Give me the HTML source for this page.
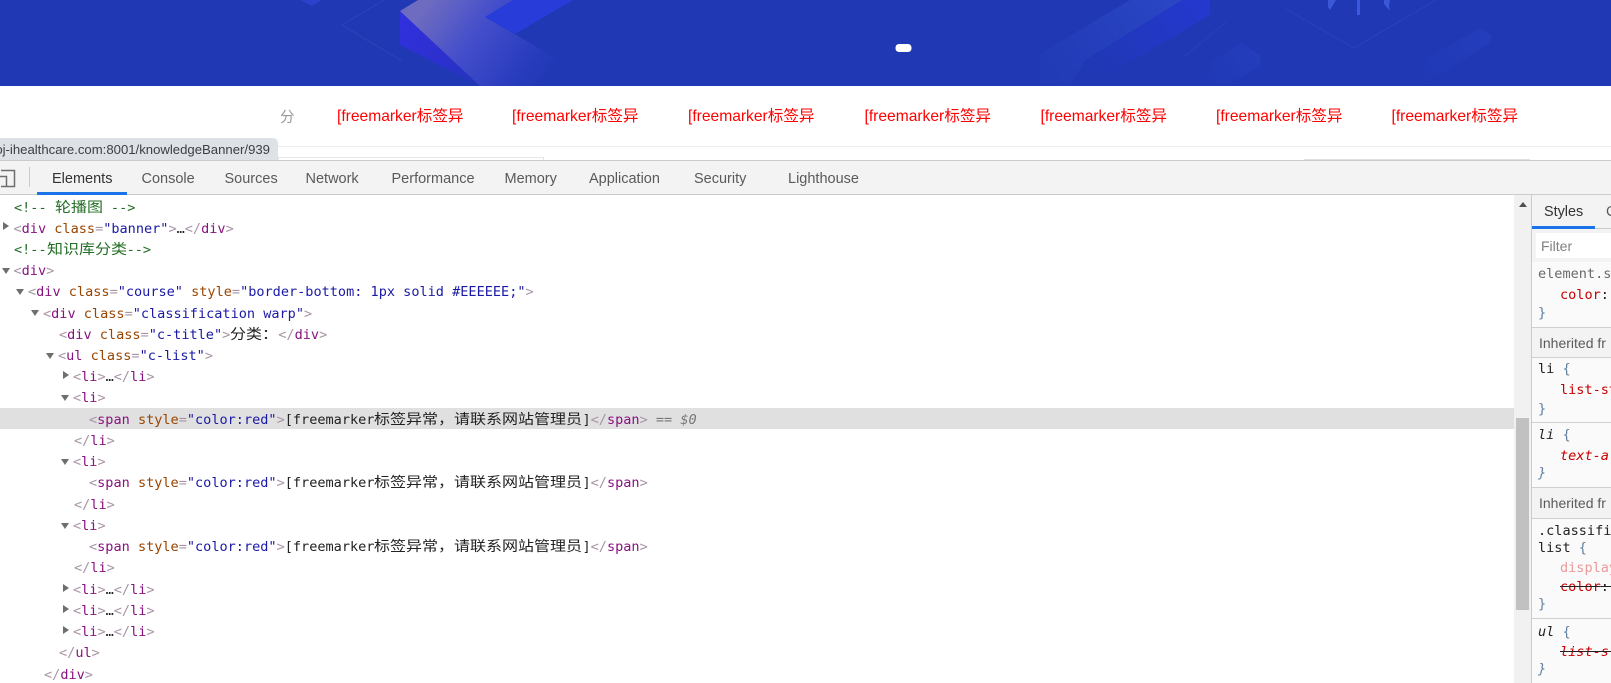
<!DOCTYPE html>
<html><head><meta charset="utf-8"><style>
*{box-sizing:border-box}
html,body{margin:0;padding:0;width:1611px;height:683px;overflow:hidden;background:#fff}
body{position:relative;font-family:"Liberation Sans","Noto Sans CJK SC",sans-serif}
.abs{position:absolute}
.r{position:absolute;top:116.5px;transform:translateY(-50%);color:#f00;font-size:15.6px;white-space:nowrap;line-height:20px}
.tab{position:absolute;top:178.5px;transform:translateY(-50%);font-size:14.5px;color:#5a5a5a;line-height:20px;white-space:nowrap}
.m{position:absolute;left:0;margin-top:0;white-space:nowrap;font-family:"DejaVu Sans Mono","Noto Sans CJK SC",monospace;font-size:13.55px;line-height:20px;height:20px;color:#222}
.k{color:#881280}.b{color:#a894a6}.a{color:#994500}.v{color:#1a1aa6}.c{color:#236e25}
.z{display:inline-block;overflow:visible;font-family:"Noto Sans CJK SC",sans-serif;font-size:14px;transform:scaleX(1.143);transform-origin:left center;vertical-align:top;line-height:19px;white-space:nowrap}
.tri{position:absolute;width:0;height:0}
.tr{border-left:6px solid #6e6e6e;border-top:4.5px solid transparent;border-bottom:4.5px solid transparent}
.td{border-top:6px solid #6e6e6e;border-left:4.5px solid transparent;border-right:4.5px solid transparent}
.s{position:absolute;left:1538px;margin-top:0;white-space:nowrap;font-family:"DejaVu Sans Mono",monospace;font-size:13.55px;line-height:20px;color:#222}
.p{left:1560px;color:#c80000}
.br{color:#5f7ea0}
.d{position:absolute;left:1532px;width:79px;height:1px;background:#d0d0d0}
.inh{position:absolute;left:1532px;width:79px;background:#f3f3f3;height:30px}
.inh span{position:absolute;left:7px;top:5px;font-size:14px;line-height:20px;color:#5a5a5a;white-space:nowrap}
.st{text-decoration:line-through;text-decoration-color:#222}
</style></head><body>

<svg class="abs" style="left:0;top:0" width="1611" height="86" viewBox="0 0 1611 86">
<defs>
<linearGradient id="g1" gradientUnits="userSpaceOnUse" x1="430" y1="0" x2="545" y2="85"><stop offset="0" stop-color="#6e6cc0"/><stop offset=".4" stop-color="#444ecb"/><stop offset=".8" stop-color="#283cbe"/><stop offset="1" stop-color="#2038b4"/></linearGradient>
<linearGradient id="g2" gradientUnits="userSpaceOnUse" x1="405" y1="20" x2="490" y2="85"><stop offset="0" stop-color="#3030dc"/><stop offset=".55" stop-color="#2c30cc"/><stop offset="1" stop-color="#2038b4"/></linearGradient>
<linearGradient id="g3" gradientUnits="userSpaceOnUse" x1="1210" y1="0" x2="1095" y2="80"><stop offset="0" stop-color="#2438d0"/><stop offset="1" stop-color="#2038b4"/></linearGradient>
<linearGradient id="g4" gradientUnits="userSpaceOnUse" x1="1170" y1="0" x2="1050" y2="75"><stop offset="0" stop-color="#2a46c4"/><stop offset="1" stop-color="#213ab6"/></linearGradient>
<linearGradient id="g5" gradientUnits="userSpaceOnUse" x1="1250" y1="45" x2="1200" y2="80"><stop offset="0" stop-color="#233dbc"/><stop offset="1" stop-color="#2038b4"/></linearGradient>
<linearGradient id="g6" gradientUnits="userSpaceOnUse" x1="1485" y1="30" x2="1410" y2="75"><stop offset="0" stop-color="#233dbc"/><stop offset="1" stop-color="#2038b4"/></linearGradient>
</defs>
<rect width="1611" height="86" fill="#2038b4"/>
<path d="M300 0h22l-10 6z" fill="#2a42cc"/>
<path d="M384 0 L342 25 L402 61" fill="none" stroke="#2f44b8" stroke-width="1"/>
<path d="M513 0 L485 17 L515 34 L573 0Z" fill="#273cd8"/>
<path d="M400 11 V45 L480 86 H540 Z" fill="url(#g2)"/>
<path d="M400 11 L418 0 H513 L485 17 L570 66 L535 86 H480Z" fill="url(#g1)"/>
<path d="M1182 0 H1210 V15 L1090 86 H1040 Z" fill="url(#g3)"/>
<path d="M1040 54 L1130 0 H1182 L1085 60 L1070 86 H1040Z" fill="url(#g4)"/>
<path d="M1185 56 L1226 22" stroke="#2640bc" stroke-width="1" fill="none"/>
<path d="M1190 76 L1241 43 L1260 55 V66 L1225 86 H1170Z" fill="url(#g5)"/>
<path d="M1286 9 L1354 48 L1436 0" fill="none" stroke="#2a42bc" stroke-width="1"/>
<path d="M1328 0 h8 l-6 10 -2 -3z M1384 0 h6 l-1 6 1 5 -6 -7z" fill="#3a58d8"/>
<rect x="1357" y="0" width="3" height="15" fill="#3a58e0"/>
<path d="M1400 74 L1480 28 L1491 35 V42 L1430 80 L1405 86 H1390Z" fill="url(#g6)"/>
<rect x="895.5" y="44" width="16" height="8" rx="3.5" fill="#fff"/>
</svg>

<div class="abs" style="left:280px;top:107px;font-size:14.5px;line-height:20px;color:#999;font-family:'Noto Sans CJK SC',sans-serif">分</div>
<div class="r" style="left:337px">[freemarker标签异</div>
<div class="r" style="left:512px">[freemarker标签异</div>
<div class="r" style="left:688px">[freemarker标签异</div>
<div class="r" style="left:864.5px">[freemarker标签异</div>
<div class="r" style="left:1040.5px">[freemarker标签异</div>
<div class="r" style="left:1216px">[freemarker标签异</div>
<div class="r" style="left:1391.5px">[freemarker标签异</div>

<div class="abs" style="left:0;top:146px;width:1611px;height:1px;background:#eee"></div>
<div class="abs" style="left:278px;top:157px;width:266px;height:4px;border:1px solid #e6e6e6"></div>
<div class="abs" style="left:1304px;top:159px;width:226px;height:2px;background:#e0e0e0"></div>

<div class="abs" style="left:0;top:138px;width:278px;height:23px;background:#dee1e6;border-top-right-radius:5px;overflow:hidden">
<div class="abs" style="right:8px;top:2px;font-size:13.15px;line-height:20px;color:#3c4043;white-space:nowrap">oj-ihealthcare.com:8001/knowledgeBanner/939</div></div>

<!-- devtools -->
<div class="abs" style="left:0;top:160px;width:1611px;height:35px;background:#f3f3f3;border-top:1px solid #cbcbcb;border-bottom:1px solid #cbcbcb"></div>
<svg class="abs" style="left:0;top:165px" width="32" height="24" viewBox="0 0 32 24"><path d="M1 5.5H14.5V21.5H1" fill="none" stroke="#6e6e6e" stroke-width="1.5"/><path d="M0 11.5H6.5V21" fill="none" stroke="#6e6e6e" stroke-width="1.5"/><rect x="29" y="2" width="1" height="20" fill="#ccc"/></svg>
<div class="tab" style="left:52px;color:#333">Elements</div>
<div class="tab" style="left:141.5px">Console</div>
<div class="tab" style="left:224.5px">Sources</div>
<div class="tab" style="left:305.5px">Network</div>
<div class="tab" style="left:391.5px">Performance</div>
<div class="tab" style="left:504.5px">Memory</div>
<div class="tab" style="left:589px">Application</div>
<div class="tab" style="left:694px">Security</div>
<div class="tab" style="left:788px">Lighthouse</div>
<div class="abs" style="left:37px;top:192px;width:90px;height:3px;background:#1a73e8"></div>

<!-- highlight -->
<div class="abs" style="left:0;top:408px;width:1514px;height:21px;background:#e0e0e0"></div>

<div class="m" style="top:198px;left:14px"><span class="c">&lt;!-- <span class="z" style="width:48px">轮播图</span> --&gt;</span></div>
<div class="tri tr" style="left:3px;top:222px"></div>
<div class="m" style="top:219px;left:13.5px"><span class="b">&lt;</span><span class="k">div</span> <span class="a">class</span><span class="b">=</span><span class="v">"banner"</span><span class="b">&gt;</span>…<span class="b">&lt;/</span><span class="k">div</span><span class="b">&gt;</span></div>
<div class="m" style="top:240px;left:14px"><span class="c">&lt;!--<span class="z" style="width:80px">知识库分类</span>--&gt;</span></div>
<div class="tri td" style="left:1.5px;top:268px"></div>
<div class="m" style="top:261px;left:13.5px"><span class="b">&lt;</span><span class="k">div</span><span class="b">&gt;</span></div>
<div class="tri td" style="left:16px;top:289px"></div>
<div class="m" style="top:282px;left:28px"><span class="b">&lt;</span><span class="k">div</span> <span class="a">class</span><span class="b">=</span><span class="v">"course"</span> <span class="a">style</span><span class="b">=</span><span class="v">"border-bottom: 1px solid #EEEEEE;"</span><span class="b">&gt;</span></div>
<div class="tri td" style="left:31px;top:310px"></div>
<div class="m" style="top:304px;left:43px"><span class="b">&lt;</span><span class="k">div</span> <span class="a">class</span><span class="b">=</span><span class="v">"classification warp"</span><span class="b">&gt;</span></div>
<div class="m" style="top:325px;left:59px"><span class="b">&lt;</span><span class="k">div</span> <span class="a">class</span><span class="b">=</span><span class="v">"c-title"</span><span class="b">&gt;</span><span class="z" style="width:48px">分类：</span><span class="b">&lt;/</span><span class="k">div</span><span class="b">&gt;</span></div>
<div class="tri td" style="left:46px;top:353px"></div>
<div class="m" style="top:346px;left:58px"><span class="b">&lt;</span><span class="k">ul</span> <span class="a">class</span><span class="b">=</span><span class="v">"c-list"</span><span class="b">&gt;</span></div>
<div class="tri tr" style="left:63px;top:371px"></div>
<div class="m" style="top:367px;left:73px"><span class="b">&lt;</span><span class="k">li</span><span class="b">&gt;</span>…<span class="b">&lt;/</span><span class="k">li</span><span class="b">&gt;</span></div>
<div class="tri td" style="left:61px;top:395px"></div>
<div class="m" style="top:388px;left:73px"><span class="b">&lt;</span><span class="k">li</span><span class="b">&gt;</span></div>
<div class="m" style="top:410px;left:89px"><span class="b">&lt;</span><span class="k">span</span> <span class="a">style</span><span class="b">=</span><span class="v">"color:red"</span><span class="b">&gt;</span>[freemarker<span class="z" style="width:208px">标签异常，请联系网站管理员</span>]<span class="b">&lt;/</span><span class="k">span</span><span class="b">&gt;</span> <span style="color:#777">==</span> <i style="color:#777">$0</i></div>
<div class="m" style="top:431px;left:74px"><span class="b">&lt;/</span><span class="k">li</span><span class="b">&gt;</span></div>
<div class="tri td" style="left:61px;top:459px"></div>
<div class="m" style="top:452px;left:73px"><span class="b">&lt;</span><span class="k">li</span><span class="b">&gt;</span></div>
<div class="m" style="top:473px;left:89px"><span class="b">&lt;</span><span class="k">span</span> <span class="a">style</span><span class="b">=</span><span class="v">"color:red"</span><span class="b">&gt;</span>[freemarker<span class="z" style="width:208px">标签异常，请联系网站管理员</span>]<span class="b">&lt;/</span><span class="k">span</span><span class="b">&gt;</span></div>
<div class="m" style="top:495px;left:74px"><span class="b">&lt;/</span><span class="k">li</span><span class="b">&gt;</span></div>
<div class="tri td" style="left:61px;top:523px"></div>
<div class="m" style="top:516px;left:73px"><span class="b">&lt;</span><span class="k">li</span><span class="b">&gt;</span></div>
<div class="m" style="top:537px;left:89px"><span class="b">&lt;</span><span class="k">span</span> <span class="a">style</span><span class="b">=</span><span class="v">"color:red"</span><span class="b">&gt;</span>[freemarker<span class="z" style="width:208px">标签异常，请联系网站管理员</span>]<span class="b">&lt;/</span><span class="k">span</span><span class="b">&gt;</span></div>
<div class="m" style="top:558px;left:74px"><span class="b">&lt;/</span><span class="k">li</span><span class="b">&gt;</span></div>
<div class="tri tr" style="left:63px;top:584px"></div>
<div class="m" style="top:580px;left:73px"><span class="b">&lt;</span><span class="k">li</span><span class="b">&gt;</span>…<span class="b">&lt;/</span><span class="k">li</span><span class="b">&gt;</span></div>
<div class="tri tr" style="left:63px;top:605px"></div>
<div class="m" style="top:601px;left:73px"><span class="b">&lt;</span><span class="k">li</span><span class="b">&gt;</span>…<span class="b">&lt;/</span><span class="k">li</span><span class="b">&gt;</span></div>
<div class="tri tr" style="left:63px;top:626px"></div>
<div class="m" style="top:622px;left:73px"><span class="b">&lt;</span><span class="k">li</span><span class="b">&gt;</span>…<span class="b">&lt;/</span><span class="k">li</span><span class="b">&gt;</span></div>
<div class="m" style="top:643px;left:59px"><span class="b">&lt;/</span><span class="k">ul</span><span class="b">&gt;</span></div>
<div class="m" style="top:665px;left:44px"><span class="b">&lt;/</span><span class="k">div</span><span class="b">&gt;</span></div>

<!-- scrollbar -->
<div class="abs" style="left:1514px;top:195px;width:17px;height:488px;background:#f1f1f1"></div>
<div class="abs" style="left:1516px;top:418px;width:13px;height:192px;background:#c1c1c1"></div>
<div class="tri" style="left:1518.5px;top:202px;border-bottom:5px solid #505050;border-left:4px solid transparent;border-right:4px solid transparent"></div>
<div class="abs" style="left:1531px;top:195px;width:1px;height:488px;background:#cbcbcb"></div>

<!-- styles panel -->
<div class="abs" style="left:1532px;top:195px;width:79px;height:488px;background:#fafafa"></div>
<div class="abs" style="left:1532px;top:195px;width:79px;height:34px;background:#f3f3f3;border-bottom:1px solid #cbcbcb"></div>
<div class="abs" style="left:1544px;top:202px;font-size:14.4px;line-height:20px;color:#333">Styles</div>
<div class="abs" style="left:1606px;top:202px;font-size:14.4px;line-height:20px;color:#5a5a5a">C</div>
<div class="abs" style="left:1532px;top:226px;width:63px;height:3px;background:#1a73e8"></div>
<div class="abs" style="left:1532px;top:229px;width:79px;height:33px;background:#f3f3f3"></div>
<div class="abs" style="left:1536px;top:233px;width:75px;height:25px;background:#fff"></div>
<div class="abs" style="left:1541px;top:236px;font-size:14px;line-height:20px;color:#808080">Filter</div>

<div class="s" style="top:264px;color:#6a6a6a">element.s</div>
<div class="s p" style="top:285px">color<span style="color:#222">:</span></div>
<div class="s br" style="top:303px">}</div>
<div class="d" style="top:327px"></div>
<div class="inh" style="top:328px"><span>Inherited fr</span></div>
<div class="d" style="top:357px"></div>
<div class="s" style="top:359px">li <span class="br">{</span></div>
<div class="s p" style="top:380px">list-st</div>
<div class="s br" style="top:399px">}</div>
<div class="d" style="top:422px"></div>
<div class="s" style="top:425px"><i>li</i> <span class="br">{</span></div>
<div class="s p" style="top:446px"><i>text-a</i></div>
<div class="s br" style="top:463px"><i>}</i></div>
<div class="d" style="top:487px"></div>
<div class="inh" style="top:488px"><span>Inherited fr</span></div>
<div class="d" style="top:518px"></div>
<div class="s" style="top:521px">.classifi</div>
<div class="s" style="top:538px">list <span class="br">{</span></div>
<div class="s p" style="top:558px;color:#ea9a9a">display</div>
<div class="s p st" style="top:577px">color<span style="color:#222">:</span>&nbsp;&nbsp;</div>
<div class="s br" style="top:594px">}</div>
<div class="d" style="top:618px"></div>
<div class="s" style="top:622px"><i>ul</i> <span class="br">{</span></div>
<div class="s p st" style="top:642px"><i>list-s</i>&nbsp;</div>
<div class="s br" style="top:659px"><i>}</i></div>

</body></html>
